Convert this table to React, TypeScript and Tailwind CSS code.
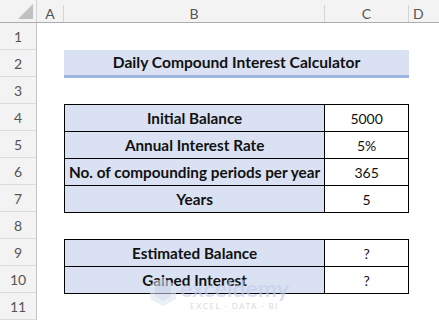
import React from "react";

const font = { fontFamily: "Lato, 'Open Sans', sans-serif" };

const inputs = [
  ["Initial Balance", "5000"],
  ["Annual Interest Rate", "5%"],
  ["No. of compounding periods per year", "365"],
  ["Years", "5"],
];

const outputs = [
  ["Estimated Balance", "?"],
  ["Gained Interest", "?"],
];

function DataTable({ rows }: { rows: string[][] }) {
  return (
    <div className="ml-[27px] w-[345px] border-t border-l border-black">
      {rows.map(([label, value]) => (
        <div key={label} className="flex h-[27px]">
          <div className="w-[261px] flex items-center justify-center bg-[#d9e1f2] border-r border-b border-black font-bold text-[15.3px] text-[#111]">
            {label}
          </div>
          <div className="w-[84px] flex items-center justify-center bg-white border-r border-b border-black text-[14px] text-[#111]">
            {value}
          </div>
        </div>
      ))}
    </div>
  );
}

export default function App() {
  return (
    <div className="relative w-[439px] h-[325px] overflow-hidden bg-white" style={font}>
      {/* column headers */}
      <div className="flex h-[23px] bg-[#f3f3f3] border-b border-[#acacac] text-[14px] text-[#555]">
        <div className="w-[37px] flex items-end justify-end border-r border-[#d4d4d4] pr-[3px] pb-[3px]">
          <div className="w-0 h-0 border-l-[15px] border-l-transparent border-b-[15px] border-b-[#c0c0c0]" />
        </div>
        <div className="w-[27px] flex items-center justify-center mt-[5px] border-r border-[#d4d4d4]">A</div>
        <div className="w-[261px] flex items-center justify-center mt-[5px] border-r border-[#d4d4d4]">B</div>
        <div className="w-[84px] flex items-center justify-center mt-[5px] border-r border-[#d4d4d4]">C</div>
        <div className="flex-1 flex items-center pl-[4px] mt-[5px]">D</div>
      </div>

      <div className="flex">
        {/* row headers */}
        <div className="w-[37px] bg-[#f3f3f3] border-r border-[#c6c6c6] text-[14px] text-[#555]">
          {Array.from({ length: 11 }, (_, i) => (
            <div key={i} className="h-[27px] flex items-center justify-center border-b border-[#dcdcdc]">
              {i + 1}
            </div>
          ))}
        </div>

        {/* sheet */}
        <div className="flex-1">
          <div className="h-[27px]" />
          <div className="ml-[27px] w-[345px] h-[28px] flex items-center justify-center bg-[#d9e1f2] border-b-[3px] border-[#9db4e0] font-bold text-[15.6px] text-[#111]">
            Daily Compound Interest Calculator
          </div>
          <div className="h-[26px]" />
          <DataTable rows={inputs} />
          <div className="h-[26px]" />
          <DataTable rows={outputs} />
        </div>
      </div>

      {/* watermark */}
      <div className="absolute left-[148px] top-[277px] flex items-start gap-[2px] opacity-60 pointer-events-none">
        <svg width="30" height="30" viewBox="0 0 30 30">
          <path d="M15 1 L28 8 L28 22 L15 29 L2 22 L2 8 Z" fill="#dfe5f1" />
          <path d="M15 6 L23 10.5 L23 19.5 L15 24 L7 19.5 L7 10.5 Z" fill="#c9d3ea" />
        </svg>
        <div className="flex flex-col items-center leading-none">
          <span className="text-[23px] font-bold text-[#c3cdea] leading-[22px]">exceldemy</span>
          <span className="text-[8px] tracking-[1.5px] text-[#bfc3cc] mt-[3px]">EXCEL · DATA · BI</span>
        </div>
      </div>
    </div>
  );
}
